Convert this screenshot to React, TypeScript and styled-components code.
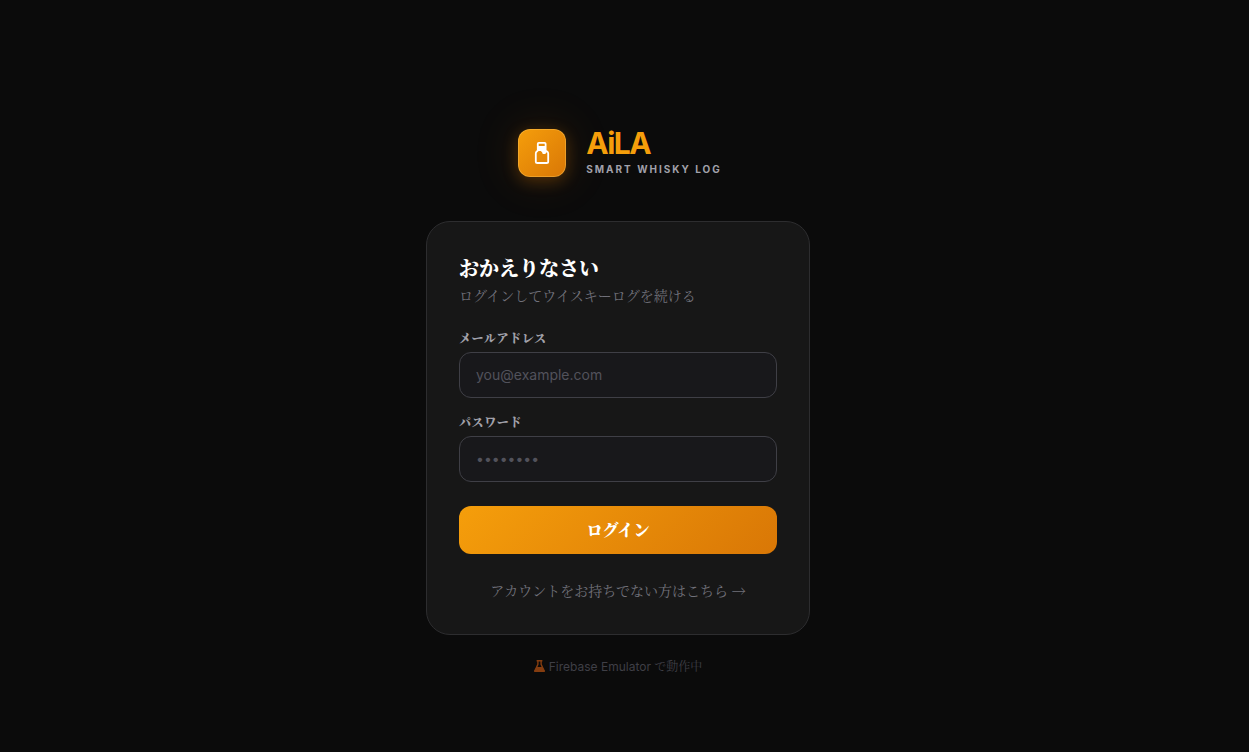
import React from 'react';
import styled, { createGlobalStyle } from 'styled-components';

const GlobalStyle = createGlobalStyle`
  *, *::before, *::after { box-sizing: border-box; }
  body {
    margin: 0;
    background: #0b0b0b;
    color: #ffffff;
    font-family: Inter, "Noto Serif CJK JP", "Noto Sans CJK JP", serif;
    font-size: 14px;
    line-height: 20px;
  }
  h1, h2, p { margin: 0; }
`;

const Page = styled.main`
  min-height: 100vh;
  display: flex;
  flex-direction: column;
  align-items: center;
  justify-content: center;
  padding: 52px 13px 0 0;
`;

const Content = styled.div`
  width: 100%;
  max-width: 384px;
  display: flex;
  flex-direction: column;
`;

const Brand = styled.header`
  display: flex;
  justify-content: center;
  gap: 20px;
  height: 48px;
  margin-bottom: 44px;
  padding-left: 4px;
`;

const LogoTile = styled.div`
  width: 48px;
  height: 48px;
  flex: none;
  display: grid;
  place-items: center;
  border: 1px solid rgba(255, 200, 90, 0.4);
  border-radius: 12px;
  background: linear-gradient(135deg, #f59e0b, #d97706) border-box;
  box-shadow: 0 4px 16px rgba(217, 119, 6, 0.3), 0 0 48px rgba(217, 119, 6, 0.16);
`;

const BrandName = styled.h1`
  color: #f59e0b;
  font-size: 30px;
  font-weight: 700;
  line-height: 28px;
  letter-spacing: -0.05em;
`;

const Tagline = styled.p`
  margin-top: 5px;
  color: #a1a1aa;
  font-size: 10px;
  font-weight: 700;
  line-height: 15px;
  letter-spacing: 0.2em;
  white-space: nowrap;
`;

const Card = styled.section`
  padding: 32px;
  border: 1px solid #2d2d2f;
  border-radius: 24px;
  background: #171717;
`;

const Title = styled.h2`
  font-size: 20px;
  font-weight: 900;
  line-height: 30px;
`;

const Subtitle = styled.p`
  margin: 2px 0 24px;
  color: #71717a;
`;

const Form = styled.form`
  display: flex;
  flex-direction: column;
  gap: 16px;
`;

const Field = styled.div`
  display: flex;
  flex-direction: column;
  gap: 4px;
`;

const Label = styled.label`
  color: #a1a1aa;
  font-size: 12px;
  font-weight: 900;
  line-height: 18px;
  letter-spacing: 0.05em;
`;

const Input = styled.input`
  width: 100%;
  height: 46px;
  padding: 0 16px 1px;
  border: 1px solid #3f3f46;
  border-radius: 12px;
  outline: none;
  background: #18181b;
  color: #ffffff;
  font: inherit;

  &::placeholder { color: #52525b; opacity: 1; }
  &:focus-visible { border-color: #f59e0b; }
`;

const SubmitButton = styled.button`
  height: 48px;
  margin-top: 8px;
  border: 0;
  border-radius: 12px;
  background: linear-gradient(135deg, #f59e0b, #d97706);
  color: #ffffff;
  font: inherit;
  font-size: 16px;
  font-weight: 900;
  cursor: pointer;
`;

const SignUp = styled.p`
  margin: 26px 0 2px;
  font-family: "Noto Serif CJK JP", "Noto Sans CJK JP", serif;
  text-align: center;
`;

const SignUpLink = styled.a`
  color: #71717a;
  text-decoration: none;
`;

const EmulatorNote = styled.p`
  display: flex;
  align-items: center;
  justify-content: center;
  gap: 4px;
  margin-top: 24px;
  color: #3f3f46;
  font-size: 12px;
  line-height: 16px;
`;

const BottleIcon = () => (
  <svg width="24" height="24" viewBox="0 0 24 24" fill="none" aria-hidden="true">
    <path
      d="M7.8 9.6V2.8Q7.8 1.8 8.8 1.8H14.6Q15.6 1.8 15.6 2.8V9.4L17.2 10.6Q18.2 11.3 18.2 12.5V20.4Q18.2 22 16.6 22H7.4Q5.8 22 5.8 20.4V12.5Q5.8 11.3 6.5 10.7Z"
      stroke="#fff"
      strokeWidth="1.8"
      strokeLinejoin="round"
    />
    <path d="M7.8 5H15.6V9.2L17.4 11Q15.6 11.4 15.4 13H12.8Q12.2 10.6 10.6 10H7Z" fill="#fff" />
  </svg>
);

const FlaskIcon = () => (
  <svg width="11" height="14" viewBox="0 0 11 14" fill="none" aria-hidden="true">
    <path d="M2.6 .7H8.4M3.9 .8V4.4L1 10.8H10L7.1 4.4V.8" stroke="#853d10" strokeWidth="1.4" />
    <path d="M2.4 7H8.6L10.9 10.8Q11.2 12 10 12H1Q-.2 12 .1 10.8Z" fill="#853d10" />
  </svg>
);

export default function App() {
  return (
    <>
      <GlobalStyle />
      <Page>
        <Content>
          <Brand>
            <LogoTile>
              <BottleIcon />
            </LogoTile>
            <div>
              <BrandName>AiLA</BrandName>
              <Tagline>SMART WHISKY LOG</Tagline>
            </div>
          </Brand>
          <Card>
            <Title>おかえりなさい</Title>
            <Subtitle>ログインしてウイスキーログを続ける</Subtitle>
            <Form onSubmit={(event) => event.preventDefault()}>
              <Field>
                <Label htmlFor="email">メールアドレス</Label>
                <Input id="email" type="email" placeholder="you@example.com" />
              </Field>
              <Field>
                <Label htmlFor="password">パスワード</Label>
                <Input id="password" type="password" placeholder="••••••••" />
              </Field>
              <SubmitButton type="submit">ログイン</SubmitButton>
            </Form>
            <SignUp>
              <SignUpLink href="#signup">アカウントをお持ちでない方はこちら →</SignUpLink>
            </SignUp>
          </Card>
          <EmulatorNote>
            <FlaskIcon />
            Firebase Emulator で動作中
          </EmulatorNote>
        </Content>
      </Page>
    </>
  );
}
